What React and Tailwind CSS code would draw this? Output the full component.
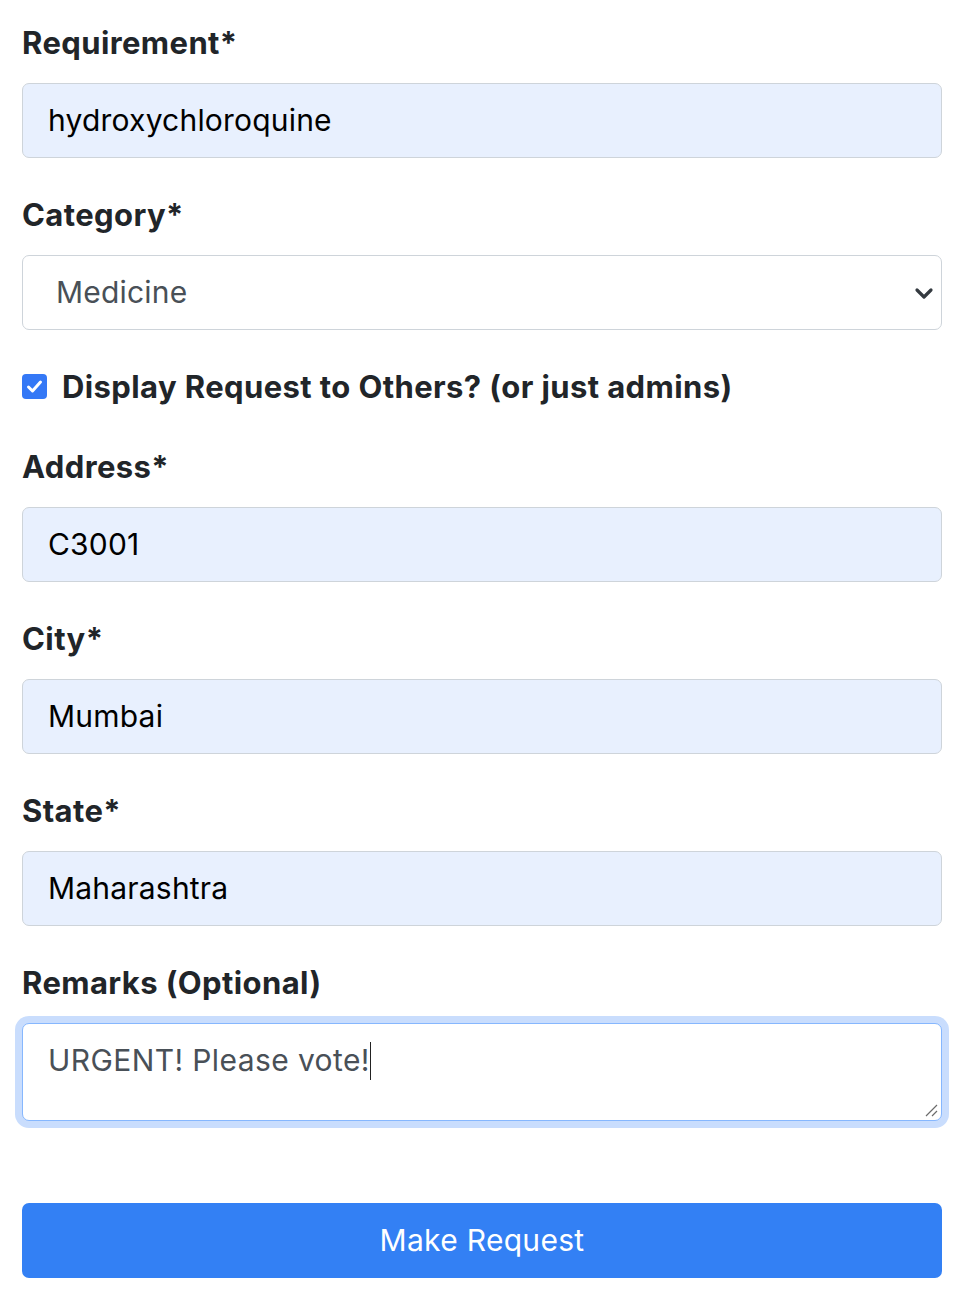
import React from "react";

const font = { fontFamily: "Inter, 'Liberation Sans', sans-serif" };

function Label({ children }) {
  return (
    <div className="text-[31px] leading-[45px] font-bold text-[#212529] mb-[18px] tracking-[0.4px]">
      {children}
    </div>
  );
}

function Field({ label, value }) {
  return (
    <div className="mb-[34px]">
      <Label>{label}</Label>
      <div className="h-[75px] rounded-[7px] border-[1.5px] border-[#ced4da] bg-[#e8f0fe] flex items-center px-[25px] text-[30px] text-[#000] tracking-[0.2px]">
        {value}
      </div>
    </div>
  );
}

export default function App() {
  return (
    <div className="bg-white w-[966px] h-[1296px] pl-[22px] pr-[24px] pt-[20px]" style={font}>
      <Field label="Requirement*" value="hydroxychloroquine" />

      <div className="mb-[34px]">
        <Label>Category*</Label>
        <div className="h-[75px] rounded-[7px] border-[1.5px] border-[#ced4da] bg-white flex items-center pl-[33px] pr-[7px] text-[30px] text-[#495057] tracking-[0.2px]">
          <span className="flex-1">Medicine</span>
          <svg width="20" height="14" viewBox="0 0 20 14">
            <path d="M3 4 L10 11 L17 4" fill="none" stroke="#343a40" strokeWidth="3.2" strokeLinecap="round" strokeLinejoin="round" />
          </svg>
        </div>
      </div>

      <div className="flex items-center h-[45px] mb-[35px]">
        <div className="w-[25px] h-[25px] rounded-[4px] bg-[#3478f6] flex items-center justify-center mr-[15px]">
          <svg width="17" height="15" viewBox="0 0 17 15">
            <path d="M2.5 8 L6.5 12 L14.5 3" fill="none" stroke="white" strokeWidth="3" strokeLinecap="round" strokeLinejoin="round" />
          </svg>
        </div>
        <span className="text-[31px] leading-[45px] font-bold text-[#212529] tracking-[0.4px]">
          Display Request to Others? (or just admins)
        </span>
      </div>

      <Field label="Address*" value="C3001" />
      <Field label="City*" value="Mumbai" />
      <Field label="State*" value="Maharashtra" />

      <div className="mb-[82px]">
        <Label>Remarks (Optional)</Label>
        <div className="relative h-[98px] rounded-[7px] border-[1.5px] border-[#86b7fe] bg-white shadow-[0_0_0_7px_#c9ddfd] px-[25px] pt-[16px] text-[30px] leading-[40px] text-[#495057] tracking-[0.4px]">
          <span>URGENT! Please vote!</span>
          <span className="inline-block w-[1.5px] h-[38px] bg-[#222] align-middle -mt-[4px]"></span>
          <svg className="absolute right-[3px] bottom-[3px]" width="14" height="14" viewBox="0 0 14 14">
            <path d="M2 13 L13 2 M8 13 L13 8" stroke="#6b6b6b" strokeWidth="1.2" />
          </svg>
        </div>
      </div>

      <div className="h-[75px] rounded-[7px] bg-[#3380f4] flex items-center justify-center text-white text-[30px] tracking-[0.3px]">
        Make Request
      </div>
    </div>
  );
}
